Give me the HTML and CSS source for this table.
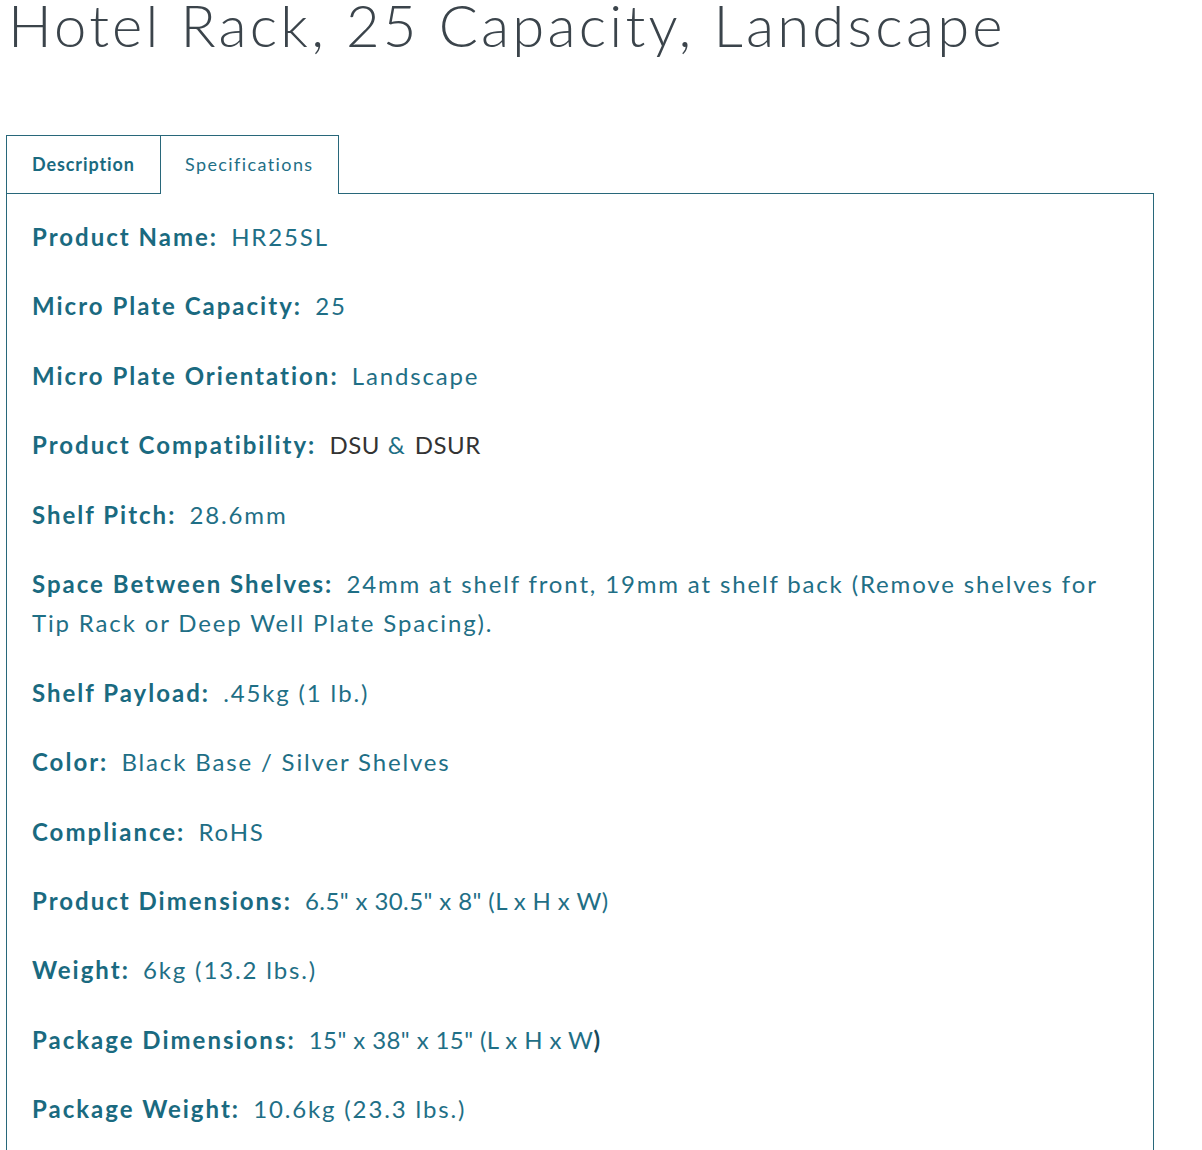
FILE: index.html
```html
<!DOCTYPE html>
<html lang="en">
<head>
<meta charset="utf-8">
<title>Hotel Rack, 25 Capacity, Landscape</title>
<link rel="stylesheet" href="styles.css">
</head>
<body>
<div class="page">
  <h1 class="title">Hotel Rack, 25 Capacity, Landscape</h1>
  <div class="tabs">
    <ul class="tab-list">
      <li class="tab tab-desc">Description</li>
      <li class="tab tab-spec is-active">Specifications</li>
    </ul>
    <div class="panel">
      <p class="row"><span class="label">Product Name:</span> <span class="value">HR25SL</span></p>
      <p class="row"><span class="label">Micro Plate Capacity:</span> <span class="value">25</span></p>
      <p class="row"><span class="label">Micro Plate Orientation:</span> <span class="value">Landscape</span></p>
      <p class="row"><span class="label">Product Compatibility:</span> <span class="value"><span class="gray">DSU</span> &amp; <span class="gray">DSUR</span></span></p>
      <p class="row"><span class="label">Shelf Pitch:</span> <span class="value">28.6mm</span></p>
      <p class="row"><span class="label">Space Between Shelves:</span> <span class="value">24mm at shelf front, 19mm at shelf back (Remove shelves for Tip Rack or Deep Well Plate Spacing).</span></p>
      <p class="row"><span class="label">Shelf Payload:</span> <span class="value">.45kg (1 lb.)</span></p>
      <p class="row"><span class="label">Color:</span> <span class="value">Black Base / Silver Shelves</span></p>
      <p class="row"><span class="label">Compliance:</span> <span class="value">RoHS</span></p>
      <p class="row"><span class="label">Product Dimensions:</span> <span class="value tight">6.5" x 30.5" x 8" (L x H x W)</span></p>
      <p class="row"><span class="label">Weight:</span> <span class="value">6kg (13.2 lbs.)</span></p>
      <p class="row"><span class="label">Package Dimensions:</span> <span class="value tight">15" x 38" x 15" (L x H x W<span class="dark">)</span></span></p>
      <p class="row"><span class="label">Package Weight:</span> <span class="value">10.6kg (23.3 lbs.)</span></p>
    </div>
  </div>
</div>
</body>
</html>
```

FILE: styles.css
```css
html, body {
  margin: 0;
  padding: 0;
  background: #ffffff;
}

body {
  font-family: Lato, "Open Sans", "DejaVu Sans", sans-serif;
  color: #1f6f86;
}

.page {
  width: 1202px;
}

.title {
  margin: 0 0 85px 0;
  padding-left: 8px;
  font-size: 58px;
  line-height: 50px;
  font-weight: 300;
  letter-spacing: 3.2px;
  color: #3b444b;
  white-space: nowrap;
}

.tabs {
  margin-left: 6px;
  width: 1148px;
}

.tab-list {
  list-style: none;
  margin: 0;
  padding: 0;
  display: flex;
}

.tab {
  box-sizing: border-box;
  height: 58px;
  line-height: 57px;
  border: 1px solid #28677a;
  border-bottom: none;
  font-size: 18px;
  background: #ffffff;
}

.tab-desc {
  width: 155px;
  padding-left: 25px;
  font-weight: 700;
  letter-spacing: 0.9px;
  color: #1a6a80;
}

.tab-spec {
  width: 179px;
  margin-left: -1px;
  padding-left: 24px;
  font-weight: 400;
  letter-spacing: 1.4px;
  color: #1f6f86;
  position: relative;
  z-index: 1;
  height: 59px;
  margin-bottom: -1px;
}

.panel {
  border: 1px solid #28677a;
  border-bottom: none;
  padding: 23px 26px 40px 25px;
  min-height: 960px;
}

.row {
  margin: 0 0 30px 0;
  font-size: 24px;
  line-height: 39.4px;
}

.label {
  font-weight: 700;
  letter-spacing: 2px;
  color: #1a6a80;
  margin-right: 7px;
}

.value {
  font-weight: 400;
  letter-spacing: 1.85px;
  color: #1f6f86;
}

.value.tight {
  letter-spacing: 0.4px;
}

.gray {
  color: #333333;
  letter-spacing: 0.5px;
}

.dark {
  color: #17485a;
  font-weight: 700;
}
```
